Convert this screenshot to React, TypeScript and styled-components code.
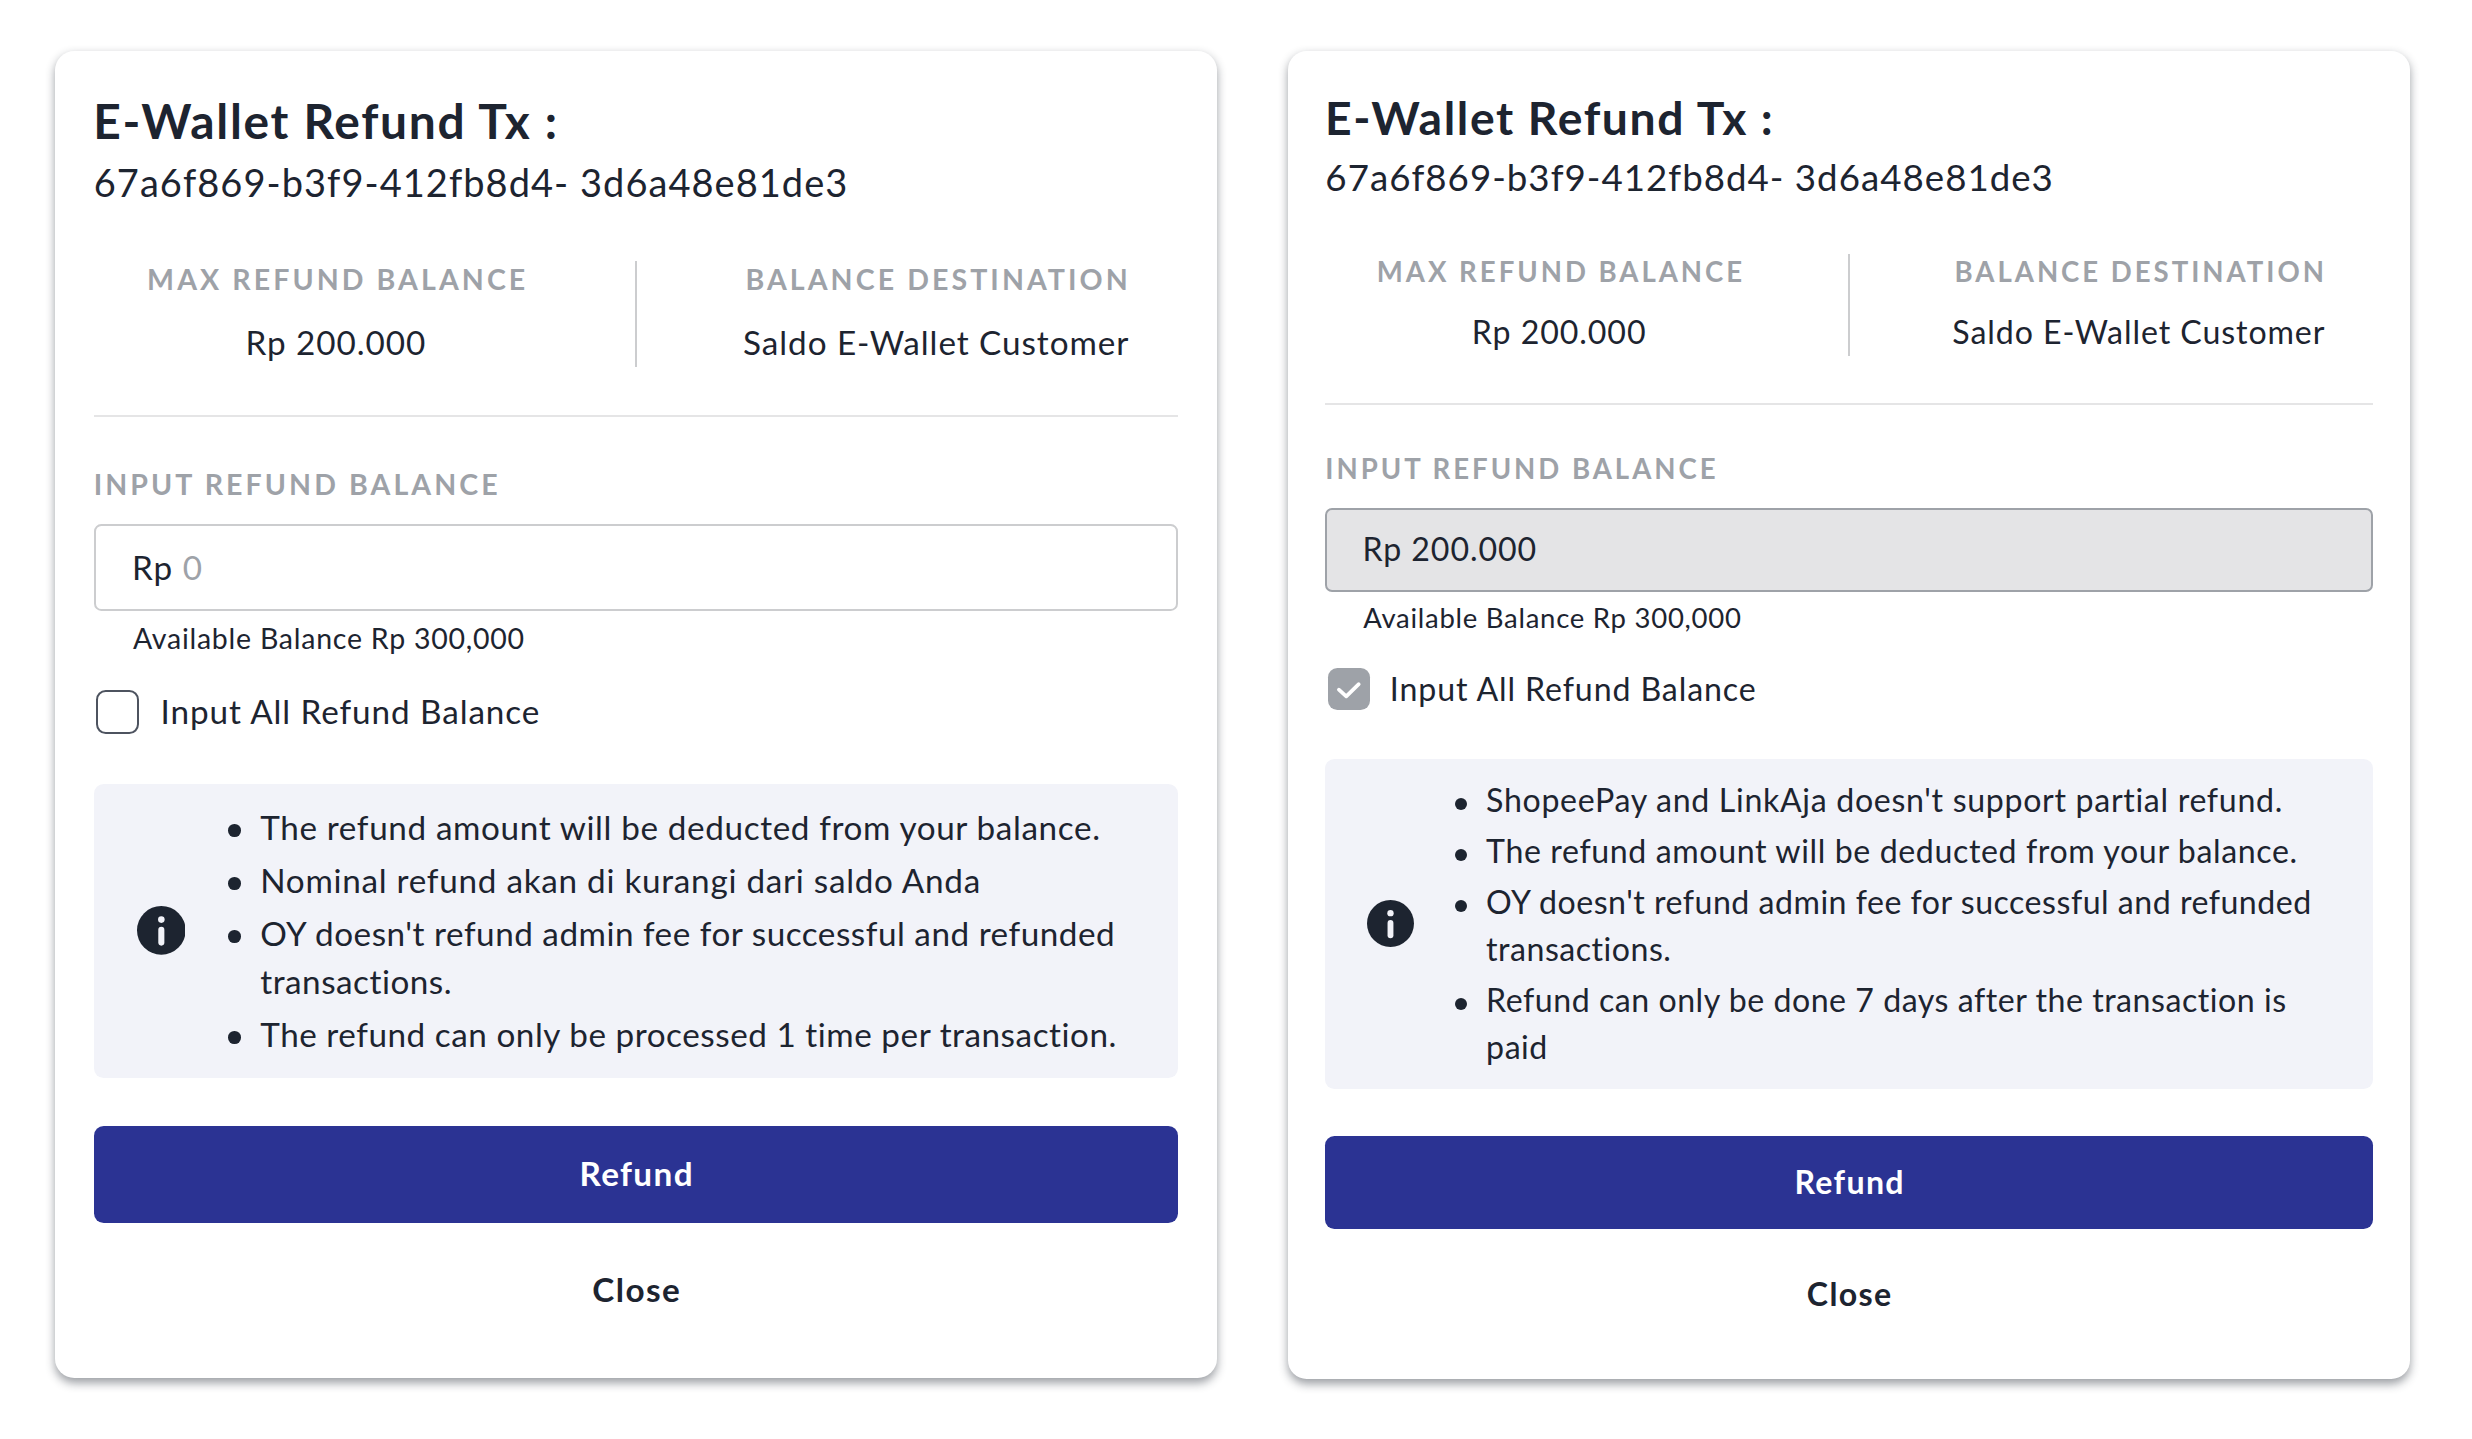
import React from "react";
import styled, { createGlobalStyle } from "styled-components";

const ink = "#1d2430";
const muted = "#9ea2a8";

/* Every length in a dialog is a multiple of --u, so a dialog scales as a whole. */
const u = (n: number) => `calc(var(--u) * ${n})`;

const GlobalStyle = createGlobalStyle`
  * { box-sizing: border-box; }
  body { margin: 0; background: #fff; }
`;

const Page = styled.main`
  display: flex;
  align-items: flex-start;
  gap: 71px;
  width: 2472px;
  height: 1439px;
  padding: 51px 55px;
  overflow: hidden;
  background: #fff;
  color: ${ink};
  font-family: Lato, "Open Sans", sans-serif;
`;

const Card = styled.section<{ $unit: number }>`
  --u: ${p => p.$unit}px;
  display: flex;
  flex-direction: column;
  flex: none;
  width: ${u(480)};
  padding: ${u(16)};
  border-radius: ${u(8)};
  background: #fff;
  box-shadow: 0 ${u(2)} ${u(4)} rgba(30, 36, 48, 0.44);
`;

const Title = styled.h1`
  margin: 0 0 0 ${u(-0.2)};
  font-size: ${u(19.8)};
  font-weight: 700;
  line-height: ${u(25.2)};
  letter-spacing: ${u(0.7)};
`;

const TxId = styled.p`
  margin: 0;
  font-size: ${u(15.7)};
  line-height: ${u(25.8)};
  letter-spacing: ${u(0.43)};
`;

const Stats = styled.div`
  display: flex;
  justify-content: space-between;
  height: ${u(43.8)};
  margin-top: ${u(19.7)};
`;

const Stat = styled.div`
  display: flex;
  flex-direction: column;
  align-items: center;
  gap: ${u(8.8)};
  width: ${u(200)};
`;

const StatDivider = styled.div`
  width: 2px;
  background: #cccdcf;
`;

const Caption = styled.div`
  font-size: ${u(11.8)};
  font-weight: 700;
  line-height: ${u(15.4)};
  letter-spacing: ${u(1.27)};
  color: ${muted};
`;

const StatCaption = styled(Caption)`
  padding-left: ${u(1.6)};
`;

const StatValue = styled.div`
  font-size: ${u(13.75)};
  line-height: ${u(19)};
  letter-spacing: ${u(0.39)};
`;

const Rule = styled.hr`
  width: 100%;
  height: ${u(1)};
  margin: ${u(19.9)} 0 ${u(19.85)};
  border: 0;
  background: #e5e5e6;
`;

const Field = styled.div<{ $disabled: boolean }>`
  display: flex;
  align-items: center;
  height: ${u(35.9)};
  margin-top: ${u(8.75)};
  padding: 0 ${u(15)} ${u(0.7)};
  border: ${u(1)} solid ${p => (p.$disabled ? muted : "#cccdcf")};
  border-radius: ${u(3)};
  background: ${p => (p.$disabled ? "#e4e4e6" : "#fff")};
  font-size: ${u(13.75)};
  letter-spacing: ${u(0.39)};
  white-space: pre;
`;

const Placeholder = styled.span`
  color: ${muted};
`;

const Hint = styled.div`
  margin-top: ${u(2.5)};
  padding-left: ${u(16.2)};
  font-size: ${u(11.78)};
  line-height: ${u(18)};
  letter-spacing: ${u(0.31)};
`;

const CheckRow = styled.label`
  display: flex;
  gap: ${u(8.7)};
  height: ${u(18)};
  margin-top: ${u(12.2)};
  padding-left: ${u(1.1)};
`;

const CheckBox = styled.span<{ $checked: boolean }>`
  display: flex;
  flex: none;
  width: ${u(17.8)};
  height: ${u(18)};
  border: ${p => (p.$checked ? "0" : "2px")} solid #4d535f;
  border-radius: ${u(4)};
  background: ${p => (p.$checked ? muted : "#fff")};

  svg { width: 100%; height: 100%; }
`;

const CheckLabel = styled.span`
  font-size: ${u(13.75)};
  line-height: ${u(17.9)};
  letter-spacing: ${u(0.38)};
`;

const Info = styled.div`
  display: flex;
  align-items: center;
  margin-top: ${u(20.8)};
  padding: ${u(7.9)} ${u(20)} ${u(8)} ${u(17.8)};
  border-radius: ${u(4)};
  background: #f2f3f9;

  > svg { flex: none; width: ${u(20.1)}; height: ${u(20.1)}; }
`;

const Notes = styled.ul`
  display: flex;
  flex-direction: column;
  flex: 1;
  gap: ${u(1.83)};
  margin: 0 0 0 ${u(17.7)};
  padding: 0;
  list-style: none;
  font-size: ${u(13.75)};
  line-height: ${u(20)};
`;

const Note = styled.li<{ $track: number }>`
  display: flex;
  gap: ${u(8)};
  letter-spacing: ${p => u(p.$track)};

  &::before {
    content: "";
    flex: none;
    width: ${u(5.2)};
    height: ${u(5.2)};
    margin-top: ${u(8.8)};
    border-radius: 50%;
    background: ${ink};
  }
`;

const Button = styled.button<{ $primary?: boolean }>`
  height: ${u(40)};
  margin: ${p => u(p.$primary ? 20 : 7.9)} 0 0;
  padding: 0 0 ${u(1)} ${u(0.6)};
  border: 0;
  border-radius: ${u(4)};
  background: ${p => (p.$primary ? "#2b3393" : "transparent")};
  color: ${p => (p.$primary ? "#fff" : ink)};
  font-family: inherit;
  font-size: ${u(13.75)};
  font-weight: 700;
  letter-spacing: ${u(0.57)};
`;

const InfoIcon = () => (
  <svg viewBox="0 0 20 20">
    <circle cx="10" cy="10" r="10" fill={ink} />
    <circle cx="10" cy="5.6" r="1.35" fill="#f2f3f9" />
    <rect x="8.75" y="8.5" width="2.5" height="7.8" rx="1.25" fill="#f2f3f9" />
  </svg>
);

const CheckIcon = () => (
  <svg viewBox="0 0 18 18" fill="none" stroke="#fff" strokeWidth="1.6" strokeLinecap="round" strokeLinejoin="round">
    <path d="M4.7 9.3 7.9 12.2 13.3 6.9" />
  </svg>
);

type NoteItem = { text: string; track?: number };

type DialogProps = { unit: number; amount?: string; notes: NoteItem[] };

function RefundDialog({ unit, amount, notes }: DialogProps) {
  const all = amount !== undefined;
  return (
    <Card $unit={unit}>
      <Title>E-Wallet Refund Tx :</Title>
      <TxId>67a6f869-b3f9-412fb8d4- 3d6a48e81de3</TxId>
      <Stats>
        <Stat>
          <StatCaption>MAX REFUND BALANCE</StatCaption>
          <StatValue>Rp 200.000</StatValue>
        </Stat>
        <StatDivider />
        <Stat>
          <StatCaption>BALANCE DESTINATION</StatCaption>
          <StatValue>Saldo E-Wallet Customer</StatValue>
        </Stat>
      </Stats>
      <Rule />
      <Caption>INPUT REFUND BALANCE</Caption>
      <Field $disabled={all}>
        {all ? <span>Rp {amount}</span> : <span>Rp <Placeholder>0</Placeholder></span>}
      </Field>
      <Hint>Available Balance Rp 300,000</Hint>
      <CheckRow>
        <CheckBox $checked={all}>{all && <CheckIcon />}</CheckBox>
        <CheckLabel>Input All Refund Balance</CheckLabel>
      </CheckRow>
      <Info>
        <InfoIcon />
        <Notes>
          {notes.map(n => (
            <Note key={n.text} $track={n.track ?? 0.26}>
              <span>{n.text}</span>
            </Note>
          ))}
        </Notes>
      </Info>
      <Button $primary>Refund</Button>
      <Button>Close</Button>
    </Card>
  );
}

const openNotes: NoteItem[] = [
  { text: "The refund amount will be deducted from your balance." },
  { text: "Nominal refund akan di kurangi dari saldo Anda", track: 0.3 },
  { text: "OY doesn't refund admin fee for successful and refunded transactions.", track: 0.21 },
  { text: "The refund can only be processed 1 time per transaction.", track: 0.22 },
];

const fullNotes: NoteItem[] = [
  { text: "ShopeePay and LinkAja doesn't support partial refund.", track: 0.29 },
  { text: "The refund amount will be deducted from your balance." },
  { text: "OY doesn't refund admin fee for successful and refunded transactions.", track: 0.21 },
  { text: "Refund can only be done 7 days after the transaction is paid", track: 0.22 },
];

export default function App() {
  return (
    <Page>
      <GlobalStyle />
      <RefundDialog unit={2.4208} notes={openNotes} />
      <RefundDialog unit={2.3375} amount="200.000" notes={fullNotes} />
    </Page>
  );
}
